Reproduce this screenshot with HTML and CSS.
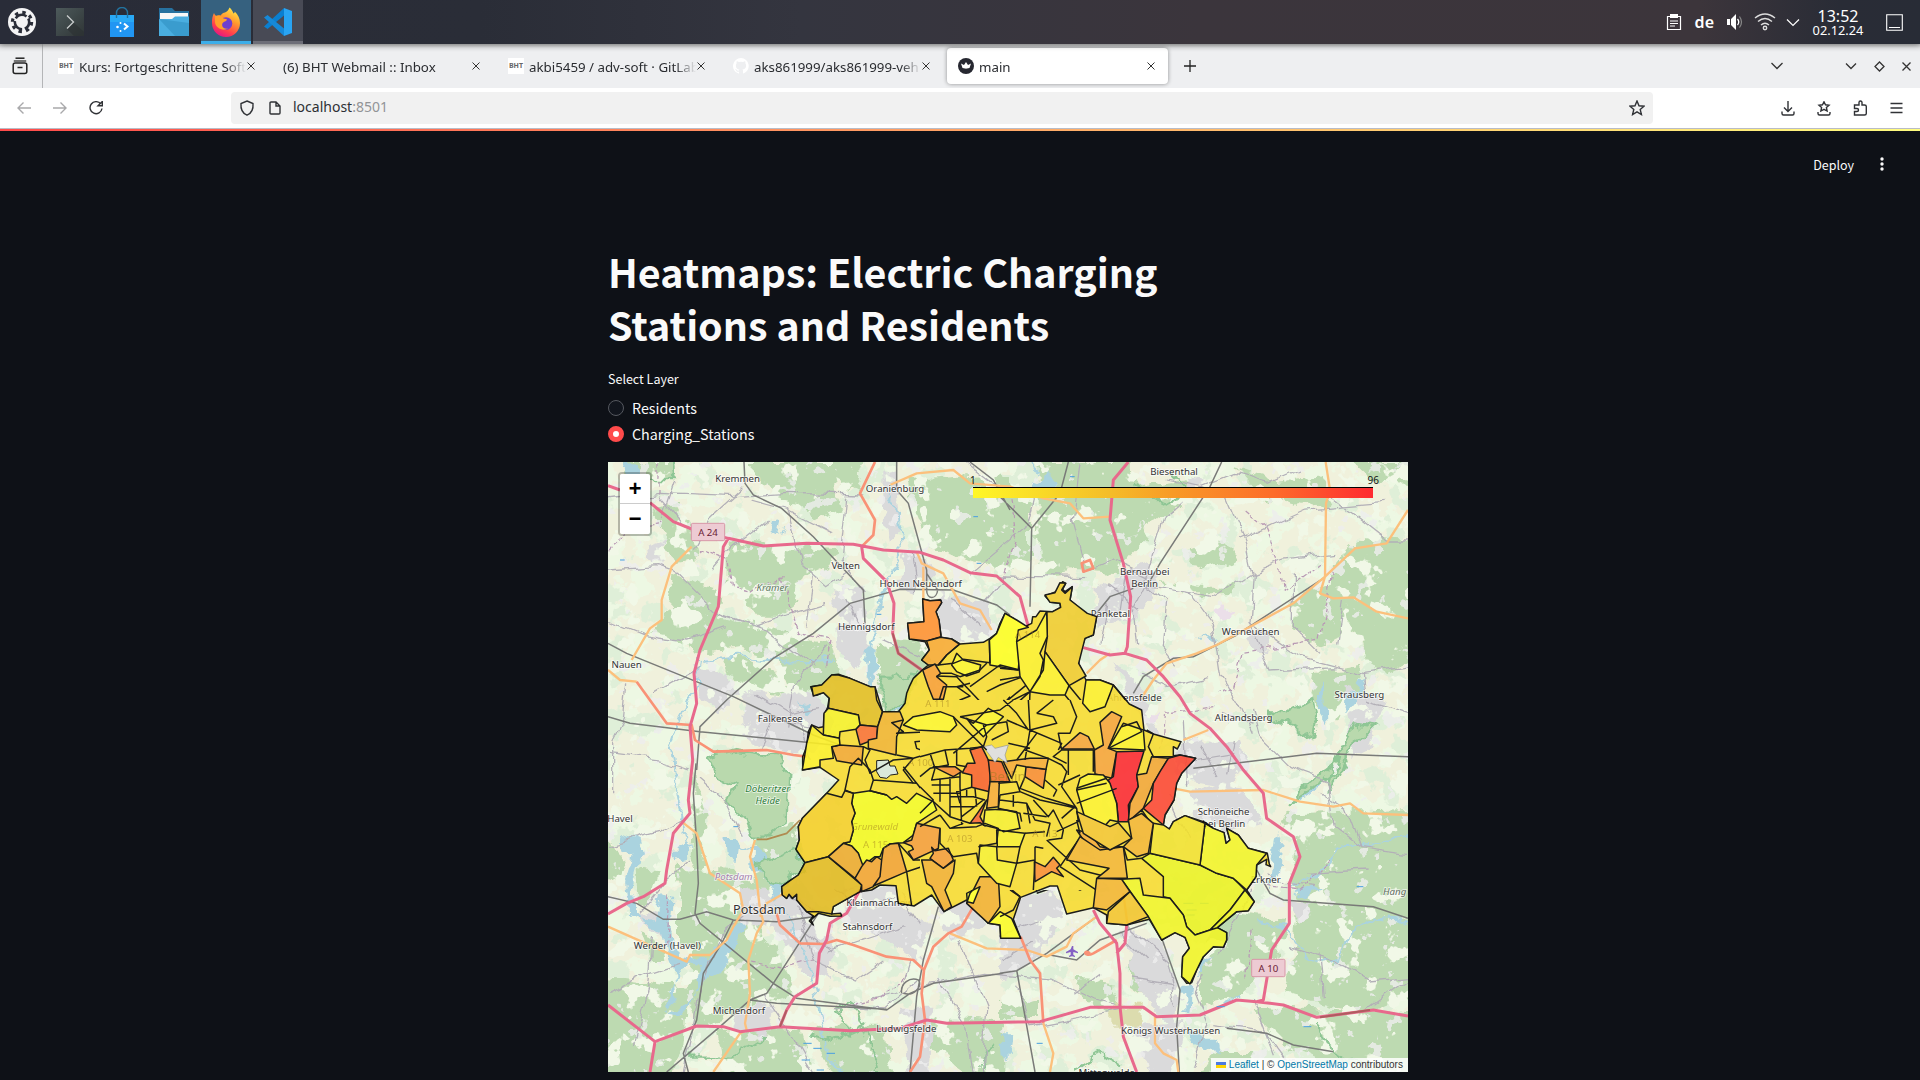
FILE: index.html
```html
<!DOCTYPE html>
<html lang="en">
<head>
<meta charset="utf-8">
<title>main</title>
<link rel="stylesheet" href="styles.css">
</head>
<body>
<div class="taskbar">
  <div class="launchers">
    <div class="launch kubuntu"><svg width="28" height="28" viewBox="0 0 28 28"><circle cx="14" cy="14" r="14" fill="#f4f4f5"/><circle cx="14" cy="14" r="7.2" fill="none" stroke="#2a2d38" stroke-width="2.6" stroke-dasharray="12.4 2.7" stroke-dashoffset="4"/><circle cx="14" cy="14" r="9.6" fill="none" stroke="#2a2d38" stroke-width="3.2" stroke-dasharray="3.4 4.14"/></svg></div>
    <div class="launch"><svg width="28" height="28" viewBox="0 0 28 28"><defs><linearGradient id="tg" x2="1" y2="1"><stop stop-color="#4d5a5b"/><stop offset="1" stop-color="#2f3536"/></linearGradient></defs><rect width="28" height="28" fill="url(#tg)"/><path d="M17 14l-6 7 7 7h10v-4z" fill="#2c3132" opacity=".6"/><path d="M11 7.500l6.500 6.500-6.500 6.500" fill="none" stroke="#c9cdcd" stroke-width="1.300"/></svg></div>
    <div class="launch"><svg width="26" height="30" viewBox="0 0 26 30"><path d="M1 8h24v22H1z" fill="#2196f3"/><path d="M1 8h24v7H1z" fill="#29a9f5"/><path d="M7.500 11V6a5.500 5.500 0 0 1 11 0v5" fill="none" stroke="#23739f" stroke-width="1.400"/><path d="M15 16.500l3.500 3-3.500 3" fill="none" stroke="#fff" stroke-width="2"/><circle cx="8.500" cy="20" r="1.300" fill="#fff"/><circle cx="11.500" cy="16" r="1" fill="#fff"/><circle cx="11.500" cy="24" r="1" fill="#fff"/></svg></div>
    <div class="launch"><svg width="30" height="28" viewBox="0 0 30 28"><path d="M0 0h13l3 3h14v16H0z" fill="#27719f"/><path d="M1 5h28v8H1z" fill="#f7f7f7"/><path d="M0 11h13l3-2.500h14V28H0z" fill="#4aaee0"/><path d="M0 11l16 17h14V15z" fill="#318fc2" opacity=".6"/></svg></div>
    <div class="launch active"><svg width="30" height="30" viewBox="0 0 30 30"><defs><linearGradient id="fx" x1=".8" y1="0" x2=".3" y2="1"><stop stop-color="#fff04a"/><stop offset=".4" stop-color="#ff9a2e"/><stop offset=".75" stop-color="#ff3f4d"/><stop offset="1" stop-color="#e31587"/></linearGradient></defs><path d="M3 6c.5 1.500 1.300 2.300 2.500 3 1-.6 2.500-.8 4-.5C11 6.500 12.500 5.800 14 5.500c2-.7 3.500-2.500 4.500-5 2 1.500 3 3.500 4 6 1-.5 1.200-1 1.200-2C27 7.500 29 11.500 29 16a14 14 0 0 1-28 0C.8 12 1.500 9 3 6z" fill="url(#fx)"/><circle cx="15" cy="16.500" r="6.300" fill="#6f3fd0"/><path d="M4 9c4-1.500 7 0 8.500 2.500 2 .2 3.200.5 3.500 1.300-1 2-3.500 1.700-4.500 3.500-1.500 3.500 2 6.500 6 5-5 3.500-13 0-13.500-6z" fill="#ffa02b"/></svg></div>
    <div class="launch open"><svg width="28" height="28" viewBox="0 0 28 28"><path d="M20 0L28 3v22l-8 3z" fill="#29a4f2"/><path d="M20 0v7.500L3.500 21 0 18.500z" fill="#0a7fd0"/><path d="M20 28v-7.500L3.500 7 0 9.500z" fill="#1689d8"/></svg></div>
  </div>
  <div class="tray">
    <svg width="16" height="18" viewBox="0 0 16 18"><path d="M1.500 3.500h13v13h-13z" fill="none" stroke="#fff" stroke-width="1.200"/><path d="M4 1h8v4H4z" fill="#fff"/><path d="M4 8h8M4 10.500h8M4 13h5" stroke="#fff"/></svg>
    <span class="lang">de</span>
    <svg width="18" height="18" viewBox="0 0 18 18"><path d="M1 6h3v6H1zM5 6l5-5v16l-5-5z" fill="#fff"/><path d="M11.500 6q2.500 3 0 6" fill="none" stroke="#fff" stroke-width="1.300"/><path d="M13.500 3.500q4 5.500 0 11" fill="none" stroke="#888" stroke-width="1.200"/></svg>
    <svg width="22" height="18" viewBox="0 0 22 18"><g fill="none" stroke="#ddd" stroke-width="1.400"><path d="M1 5q10-8 20 0M4 8.500q7-6 14 0M7 12q4-3.500 8 0"/><circle cx="11" cy="15" r="1.700"/></g></svg>
    <svg width="14" height="9" viewBox="0 0 14 9"><path d="M1 1.500l6 6 6-6" fill="none" stroke="#fff" stroke-width="1.200"/></svg>
    <div class="clock"><span class="time">13:52</span><span class="date">02.12.24</span></div>
    <svg width="17" height="17" viewBox="0 0 17 17"><path d="M.7.700h15.600v15.600H.7zM3 13.500h11" fill="none" stroke="#fff" stroke-width="1.100"/></svg>
  </div>
</div>

<div class="tabbar">
  <div class="firefox-view"><svg width="16" height="18" viewBox="0 0 16 18"><g fill="none" stroke="#222" stroke-width="1.500"><path d="M3.500 1.200h9" /><path d="M1.800 4h12.400" stroke-width="1.200"/><rect x="1.200" y="6" width="13.600" height="10.500" rx="2"/><path d="M5.500 10.500h5"/></g></svg></div>
  <div class="tabs">
    <div class="tab"><span class="bht">BHT</span><span class="label">Kurs: Fortgeschrittene Soft</span><svg class="x" viewBox="0 0 8 8"><path d="M.5.500l7 7m0-7l-7 7"/></svg></div>
    <div class="tab"><span class="label plain">(6) BHT Webmail :: Inbox</span><svg class="x" viewBox="0 0 8 8"><path d="M.5.500l7 7m0-7l-7 7"/></svg></div>
    <div class="tab"><span class="bht">BHT</span><span class="label">akbi5459 / adv-soft · GitLab</span><svg class="x" viewBox="0 0 8 8"><path d="M.5.500l7 7m0-7l-7 7"/></svg></div>
    <div class="tab"><svg class="fav" viewBox="0 0 16 16"><path fill="#fff" d="M8 0a8 8 0 0 0-2.500 15.600c.4 0 .5-.2.500-.4v-1.500c-2.200.5-2.700-1-2.700-1-.4-.9-.9-1.200-.9-1.200-.7-.5.100-.5.100-.5.8.1 1.200.8 1.200.8.7 1.200 1.900.9 2.300.7.100-.5.300-.9.500-1.100-1.800-.2-3.600-.9-3.600-4 0-.8.3-1.600.8-2.100-.1-.2-.4-1 .1-2.100 0 0 .7-.2 2.200.8a7.500 7.500 0 0 1 4 0c1.500-1 2.200-.8 2.200-.8.4 1.100.2 1.900.1 2.100.5.600.8 1.300.8 2.100 0 3.100-1.900 3.700-3.700 3.900.3.300.6.800.6 1.500v2.300c0 .2.100.5.500.4A8 8 0 0 0 8 0z"/></svg><span class="label">aks861999/aks861999-veh</span><svg class="x" viewBox="0 0 8 8"><path d="M.5.500l7 7m0-7l-7 7"/></svg></div>
    <div class="tab current"><svg class="fav" viewBox="0 0 16 16"><circle cx="8" cy="8" r="8" fill="#262730"/><path d="M3 5.500l3 1.500 2-3 2 3 3-1.500-1.500 4.500h-7z" fill="#fff"/><path d="M4.500 10h7l-3.500 1z" fill="#bbb"/></svg><span class="label">main</span><svg class="x" viewBox="0 0 8 8"><path d="M.5.500l7 7m0-7l-7 7"/></svg></div>
  </div>
  <svg class="newtab" width="12" height="12" viewBox="0 0 12 12"><path d="M6 0v12M0 6h12" stroke="#222" stroke-width="1.300"/></svg>
  <div class="winctl">
    <svg width="12" height="8" viewBox="0 0 12 8"><path d="M.5 1l5.500 5.500L11.500 1"/></svg>
    <svg class="min" width="12" height="8" viewBox="0 0 12 8"><path d="M1 1.500l5 5 5-5"/></svg>
    <svg width="11" height="11" viewBox="0 0 11 11"><path d="M5.500 1L10 5.500 5.500 10 1 5.500z"/></svg>
    <svg width="9" height="9" viewBox="0 0 9 9"><path d="M.5.500l8 8m0-8l-8 8"/></svg>
  </div>
</div>

<div class="toolbar">
  <div class="nav">
    <svg class="dim" width="14" height="14" viewBox="0 0 14 14"><path d="M14 7H1M6.500 1.500L1 7l5.500 5.500"/></svg>
    <svg class="dim" width="14" height="14" viewBox="0 0 14 14"><path d="M0 7h13M7.500 1.500L13 7l-5.500 5.500"/></svg>
    <svg width="14" height="14" viewBox="0 0 14 14"><path d="M11.800 3A6 6 0 1 0 13 7.500M13.300.500v4.300H9z"/></svg>
  </div>
  <div class="urlbar">
    <svg width="16" height="16" viewBox="0 0 16 16"><path d="M8 1L14 3.500C14.500 9 12 13.500 8 15.200 4 13.500 1.500 9 2 3.500z"/></svg>
    <svg width="12" height="14" viewBox="0 0 12 14"><path d="M2 1h5l4 4v7q0 1-1 1H2q-1 0-1-1V2q0-1 1-1zM7 1v4h4"/></svg>
    <span class="url">localhost<i>:8501</i></span>
    <svg width="16" height="16" viewBox="0 0 16 16"><path d="M8 1l2 4.800 5 .4-3.800 3.300 1.200 5L8 11.800l-4.400 2.700 1.200-5L1 6.200l5-.4z"/></svg>
  </div>
  <div class="actions">
    <svg width="14" height="15" viewBox="0 0 14 15"><path d="M7 0v10M3 6.500l4 4 4-4M1 10.500v2q0 1.500 1.500 1.500h9q1.500 0 1.500-1.500v-2"/></svg>
    <svg width="14" height="15" viewBox="0 0 14 15"><path d="M7 .800l1.500 3 3.500.4-2.600 2.300.7 3.500L7 8.300 3.900 10l.7-3.500L2 4.200l3.500-.4zM1 11v1.500Q1 14 2.500 14h9q1.500 0 1.500-1.500V11"/></svg>
    <svg width="15" height="16" viewBox="0 0 15 16"><path d="M1.500 15h10q1.800 0 1.800-1.500v-7q0-1.500-1.800-1.500H9V2.500q0-1.500-1.500-1.500T6 2.500V5H1.500v3.500H4q1.500 0 1.500 1.500T4 11.500H1.500z"/></svg>
    <svg width="13" height="12" viewBox="0 0 13 12"><path d="M.5 1.500h12M.5 6h12M.5 10.500h12"/></svg>
  </div>
</div>
<div class="decoration"></div>

<div class="app">
  <header><span>Deploy</span><svg width="4" height="14" viewBox="0 0 4 14" fill="#fafafa"><circle cx="2" cy="2" r="1.700"/><circle cx="2" cy="7" r="1.700"/><circle cx="2" cy="12" r="1.700"/></svg></header>
  <main>
    <h1>Heatmaps: Electric Charging<br>Stations and Residents</h1>
    <div class="radio-title">Select Layer</div>
    <div class="radio"><span class="dot"></span>Residents</div>
    <div class="radio"><span class="dot on"></span>Charging_Stations</div>
    <div class="map">
<svg class="tiles" width="800" height="610" viewBox="24 6 2400 1830">
<defs>
<filter id="rough" x="0" y="0" width="100%" height="100%"><feTurbulence type="fractalNoise" baseFrequency=".02" numOctaves="4" seed="4"/><feDisplacementMap in="SourceGraphic" scale="50" xChannelSelector="R" yChannelSelector="G"/></filter>
<filter id="bend" x="0" y="0" width="100%" height="100%"><feTurbulence type="fractalNoise" baseFrequency=".012" numOctaves="3" seed="6"/><feDisplacementMap in="SourceGraphic" scale="40" xChannelSelector="R" yChannelSelector="G"/></filter>
<filter id="meadow" x="0" y="0" width="100%" height="100%"><feTurbulence type="fractalNoise" baseFrequency=".014" numOctaves="5" seed="11"/><feColorMatrix values="0 0 0 0 .85  0 0 0 0 .94  0 0 0 0 .77  30 0 0 0 -16"/></filter>
<filter id="woods" x="0" y="0" width="100%" height="100%"><feTurbulence type="fractalNoise" baseFrequency=".012" numOctaves="5" seed="27"/><feColorMatrix values="0 0 0 0 .74  0 0 0 0 .86  0 0 0 0 .69  0 30 0 0 -17.800"/></filter>
<filter id="town" x="0" y="0" width="100%" height="100%"><feTurbulence type="fractalNoise" baseFrequency=".02" numOctaves="4" seed="8"/><feColorMatrix values="0 0 0 0 .855  0 0 0 0 .855  0 0 0 0 .855  0 0 30 0 -20"/></filter>
<filter id="fields" x="0" y="0" width="100%" height="100%"><feTurbulence type="fractalNoise" baseFrequency=".014" numOctaves="4" seed="18"/><feColorMatrix values="0 0 0 0 .88  0 0 0 0 .94  0 0 0 0 .8  0 0 30 0 -19"/></filter>
<clipPath id="clipNW"><path clip-rule="evenodd" d="M-600-400H2000V1600H-600ZM450 390H1110V960H450Z"/></clipPath>
<clipPath id="clipNE"><path clip-rule="evenodd" d="M-1300-400H1300V1600H-1300ZM-240 390H420V960H-240Z"/></clipPath>
<clipPath id="clipSW"><path clip-rule="evenodd" d="M-600-1000H2000V1600H-600ZM450-180H1110V390H450Z"/></clipPath>
<clipPath id="clipSE"><path clip-rule="evenodd" d="M-1300-1000H1300V1600H-1300ZM-240-180H420V390H-240Z"/></clipPath>
</defs>
<rect x="0" y="0" width="2450" height="1850" fill="#f0f1dc"/>
<rect x="0" y="0" width="2450" height="1850" filter="url(#meadow)"/>
<rect x="0" y="0" width="2450" height="1850" filter="url(#woods)"/>
<g filter="url(#rough)"><rect width="2450" height="1850" fill="none"/>
<g fill="#bddab1">
<path d="M435 6H800L770 100 700 60 720 150 640 190 600 130 540 120 500 70ZM930 60L1230 40V330L1100 300 1000 270 940 120ZM380 240L560 262 700 270 690 320 600 360 590 430 540 470 460 470 450 420 380 380ZM220 350L360 390 350 470 560 520 560 600 420 560 300 580 230 540 150 520 200 480ZM150 150L230 130 270 200 290 300 230 310 200 250ZM560 520L700 560 720 640 620 700 560 680 540 600ZM830 535L965 545 990 600 960 640 900 760 840 740ZM60 6H220V60H80ZM360 590L450 600 540 660 560 700 480 690 380 640Z"/>
<g transform="translate(1200 0)"><path d="M110 6H390L420 80 560 60 540 150 420 200 440 240 400 280 350 340 230 330 120 340 110 200ZM-10 20L90 150 90 320 -10 300ZM1080 230L1240 240V600L1160 640 1100 600 1080 520 1010 540 960 560 880 500 870 420 980 370 1010 300ZM940 640L1080 620 1090 660 1000 780 930 700ZM560 280L660 240 720 300 600 330ZM700 20L820 60 960 50 1000 130 900 140 780 110ZM490 360L600 380 700 380 690 400 540 400ZM1060 6H1240V70L1120 60Z"/></g>
<g transform="translate(0 900)"><path d="M230 320L400 330 520 400 480 500 440 750 300 800 250 720 290 600ZM10 650L260 680 250 860 200 950H10ZM450 520L520 560 600 700 450 740ZM350 810L600 800 640 950H380ZM470 240L590 180 610 300 540 400 470 380ZM640 800L850 800 880 950H700ZM290 40L320 180 300 330 270 330ZM10 240L80 300 60 360 10 340ZM950 760L1210 790 1210 950 1120 950 980 850Z"/></g>
<g transform="translate(1200 900)"><path d="M660 460L860 480 830 600 700 720 600 740 600 600ZM870 160L1240 150V700L1100 760 1000 740 860 700 880 560 900 420 870 350 890 240 850 200ZM760 740L1240 760V950H1060L860 860 800 800ZM0 720L120 710V780H0ZM230 650L350 660 340 760 240 720ZM650 870L760 870 740 950H600ZM390 560L520 700 520 770 390 680Z"/></g>
</g>
<g fill="#dadadb">
<path d="M850 30L890 20 900 200 860 240 850 120ZM910 270L990 290 1000 350 960 420 900 380ZM1000 400L1170 430 1170 530 1080 550 1020 520ZM700 390L790 380 810 560 760 640 720 560ZM280 620L380 640 420 700 360 760 300 720ZM430 700L640 700 700 790 640 880 560 880 440 840ZM140 260L200 240 190 300 150 310Z"/>
<path d="M1480 390L1640 310 1690 370 1600 480 1490 500ZM1540 600L1640 700 1690 850 1640 800 1590 720ZM1740 850L1920 830 1950 930 1860 980 1730 960ZM2230 680L2360 720 2300 880 2260 900ZM1930 500L2010 520 2000 580 1950 560ZM1770 50L1810 60 1780 100 1750 90Z"/>
<path d="M410 1280L580 1300 700 1390 690 1560 600 1530 530 1400 420 1390ZM720 1280L890 1280 940 1370 1000 1400 960 1520 860 1440 760 1400ZM900 1640L1000 1640 980 1850 930 1850ZM110 1350L210 1380 200 1430 130 1400ZM1000 1330L1110 1330 1160 1400 1050 1440ZM1200 1350L1360 1280 1400 1370 1300 1500 1200 1560ZM1560 1400L1690 1440 1740 1600 1720 1700 1620 1600ZM1600 1690L1760 1680 1720 1850 1650 1850ZM1750 1000L1900 960 1990 1080 1900 1110 1770 1060ZM2060 1320L2130 1330 2100 1380ZM420 1640L520 1640 500 1740 400 1700Z"/>
</g>
</g>
<rect x="0" y="0" width="2450" height="1850" filter="url(#town)" opacity=".8"/>
<rect x="0" y="0" width="2450" height="1850" filter="url(#fields)"/>
<g filter="url(#rough)"><rect width="2450" height="1850" fill="none"/>
<path fill="#dcdcae" d="M1540 1640h85v60h-85z"/><path fill="#ebdfe9" d="M1840 450l30-20 30 35-40 20zM1650 760h30v25h-30z"/>
<g fill="#aad3df"><path d="M100 15L120 70 90 60 60 20ZM525 180L550 190 540 230 520 220ZM800 560L830 570 825 690 800 650ZM925 690L895 755 870 750 900 710ZM590 730L640 745 625 755ZM1300 70L1340 45 1380 60 1350 85ZM1800 540L1850 535 1835 555ZM2160 660L2175 700 2180 790 2160 760ZM2240 700L2300 660 2270 720 2235 760ZM2120 1320L2160 1280 2080 1290Z"/><path d="M60 1120L110 1140 120 1180 80 1180ZM100 1180L120 1180 90 1290 140 1400 190 1420 200 1480 220 1530 230 1620 190 1660 240 1670 310 1560 370 1530 440 1400 420 1380 380 1450 320 1490 280 1500 225 1490 220 1440 215 1400 220 1320 180 1300 165 1390 90 1360 75 1260ZM370 1140L415 1140 410 1200 375 1190ZM230 1160L270 1150 260 1200 230 1210ZM200 1640L240 1530 300 1520 280 1620 200 1660ZM455 1160L500 1200 545 1280 530 1320 490 1250 450 1220ZM560 1200L600 1160 610 1210 590 1250ZM1840 1480L1810 1520 1790 1560 1800 1500ZM1750 1580L1770 1580 1765 1660 1750 1660ZM1200 1720L1240 1720 1230 1790 1205 1790ZM1770 1730L1850 1730 1860 1780 1780 1750ZM2090 1010L2180 940 2140 1000 2100 1020ZM2020 1180L2030 1120 2050 1130 2040 1240 2010 1280Z"/></g>
<path fill="#bddab1" d="M110 1230L170 1240 150 1330 120 1330ZM240 1250L280 1280 280 1450 240 1460ZM120 1420L180 1440 190 1500 150 1500Z"/>
<g fill="none" stroke="#aad3df" stroke-width="6"><path d="M865 100L895 160 905 260 880 330 850 400 830 500 800 600 820 680M310 600L400 590 560 605 700 600M300 600L280 700 240 780 210 870 230 1020 270 1170M540 1330L620 1500 660 1650 690 1800 720 1836M1290 0L1310 40M1980 1390L2060 1400 2090 1470 2160 1510 2220 1500 2240 1420 2300 1380 2424 1390M2060 1280L2150 1250 2220 1160 2330 1150 2424 1110M1880 1640L1920 1600M400 1150L450 1180"/></g>
<g fill="#b9d9ad" stroke="#8fc695" stroke-width="7"><path d="M320 890L400 870 540 890 565 930 560 1080 500 1130 460 1130 440 1080 380 1020 400 980 340 950Z"/><path d="M470 1210L590 1160 610 1230 540 1270 500 1260Z"/><path d="M840 650L900 650 950 640 920 700 870 750 840 720 860 690Z"/><path d="M2010 750L2060 760 2140 710 2150 760 2140 840 2080 800 2020 780ZM2330 800L2260 790 2230 850 2200 900 2180 1000 2220 940 2250 860ZM2070 1040L2100 990 2200 910 2220 880 2210 940 2100 1010Z"/><path fill="none" d="M1600 80L1700 130 1750 100 1720 40M260 1790L400 1790 500 1730M640 1720L700 1740 790 1700 840 1836M2150 1680L2180 1750 2300 1836M1140 1836L1180 1740M710 1650L760 1620 790 1690 740 1710ZM1420 1836L1500 1780 1560 1820M120 60L220 60 215 6"/></g>
</g>
<g filter="url(#bend)"><rect width="2450" height="1850" fill="none"/>
<g fill="none" stroke="#b3b0b8" stroke-width="3.800">
<path d="M24 120L180 100 400 110 560 100 790 105M180 110L260 200 360 240M430 80L330 170 280 260M190 180L230 60M560 150L600 310 680 380 750 330M24 330L170 320 230 340 350 460 500 510 640 620M24 480L120 520 260 540 380 500M360 460L470 500 580 460 680 430M160 700L300 620M80 670L70 780 35 850 35 1000M640 350L620 500M560 800L580 680 680 560M600 780L640 900M740 110L720 300 790 390M24 880L180 900 270 930M450 120L560 150 700 220M500 180L400 260 340 330M1100 6L1210 90M1150 430L1210 360M840 535L960 590"/>
<path d="M1440 6L1420 180 1460 330 1530 300 1640 350M1310 80L1280 200 1110 340M1750 120L1690 170 1630 360M1640 370L1760 390 1840 500 1860 640 1910 720 1960 830M1640 370L1600 450 1610 560M1640 370L1700 420 1690 560 1730 610M1760 390L1850 410 1960 340 2060 300 2200 280M1880 110L1940 250 1960 340 1950 490 2100 590 2290 640M1920 240L2120 150 2360 130M1950 490L2010 630 2200 620M2180 100L2360 240 2424 240M2080 340V500L2160 580M2230 420L2210 560M1620 640L1700 680 1830 650M2290 640L2424 620M2290 640L2300 720 2424 760M1960 750L1980 830 2070 920M1860 760L1960 800M1750 790L1760 980M2070 920L2180 960 2200 1100 2280 1160M1200 345L1470 350M1520 430L1500 560M1700 60L1800 80 1900 40 2010 70 2100 30"/>
<path d="M24 1160L180 1120 250 1080M120 1360L200 1260 270 1200M160 1430L150 1570 100 1760M24 1600L150 1540 240 1510M430 1130L380 1030 300 960M430 1370L360 1430 310 1550 280 1700 250 1836M590 1340L640 1500 760 1560 850 1500M650 1360L560 1300M680 1480L800 1440 920 1400M930 1500L900 1600 820 1620M700 1640L860 1650 960 1560M500 1610L560 1700 640 1836M1010 1560L1100 1700 1120 1836M960 1580L1150 1540 1360 1560 1480 1620 1560 1640M1080 1440L1160 1640 1150 1836M1580 1400L1700 1500 1730 1640M1250 1580L1290 1700 1560 1650M1420 1600L1500 1540M1590 1560L1720 1580M1780 1820L1820 1700 1780 1600 1810 1540M1840 1700L2000 1720 2060 1800 2200 1820M1950 1300L1860 1480M2000 1240L2060 1270 2150 1280M2160 1000L2240 1050 2280 1160 2424 1180M2120 1240L2300 1230M2070 1460L2200 1500 2300 1560 2424 1550M2170 1610L2160 1480M1960 1620L2020 1780M2300 1650L2424 1560M1760 1130L1700 1000"/>
<path d="M460 700L560 760 660 740M480 860L520 780 640 800M700 1290L760 1330 880 1320M900 1300L960 1400M600 1400L700 1480M740 420L780 500M1530 380L1620 450M1580 340L1560 480M1200 1420L1320 1380M1210 1500L1300 1450M1560 1420L1640 1500M1780 900L1900 880M1800 860L1860 960M1900 840L1880 940M930 280L950 400M1050 420L1140 500"/>
<path stroke="#b99bb5" stroke-dasharray="14 7" d="M180 6V110M24 270L100 200 190 190M560 350L480 370 450 390 400 380 390 300 290 270M550 350L570 450 600 520 690 540 680 620M1230 100L1250 240 1210 350M1940 150L2000 200 2040 300 2050 390 2160 310M2200 340L2160 540 1930 580 1900 680 1840 700M1840 740L1700 760 1690 860M450 1500L560 1520 640 1500M210 1300L200 1460M1950 1400L1940 1560M740 1640L840 1620 920 1540M2010 1280L2100 1290 2190 1200"/>
</g>
</g>
<g fill="none" stroke="#797a78" stroke-width="4.500">
<path d="M432 6L435 70 460 105 545 145 640 230 790 390 795 490M890 6V90L925 130 980 330V390C980 420 1010 420 1013 390L980 340M24 550L80 580 400 710 640 825 720 855M24 770L90 790 300 815 700 855M290 930L300 800 380 720 520 595 640 520 750 430 900 388 1060 390 1190 435 1230 465M1110 6L1180 60 1230 150M1405 6L1380 100 1295 205 1290 440M1200 110L1295 205M1865 6L1830 80 1680 310 1640 380M1490 460L1530 410 1600 385M1600 700L1630 650 1720 595 1780 590 1910 525 2170 355M1780 925L2150 880 2424 890"/>
<path d="M288 910L280 1000 290 1150 295 1270 285 1360 300 1390 520 1570 590 1615 860 1650 930 1600 1000 1570 1210 1540M24 1310L110 1330 190 1378 240 1378 320 1355 400 1380 530 1385 640 1370 655 1360 520 1570 500 1600 450 1620 360 1700 200 1836M450 1620L530 1630 860 1648M1015 1340L970 1500 950 1610 930 1836M400 1380L365 1450 310 1540 290 1680 250 1780 265 1836M905 1600C900 1570 930 1550 955 1560C970 1580 940 1610 910 1600M1200 1540L1250 1532 1340 1480 1490 1370M1250 1530L1305 1836M1350 1485L1430 1500 1500 1440 1640 1390M1680 1420L1740 1590 1730 1700 1738 1836M1970 1230L2010 1300 2050 1320 2320 1340 2424 1375M1880 1705L2000 1720 2080 1755 2200 1775"/>
</g>
<g fill="none" stroke-linejoin="round">
<g stroke="#fcc07c" stroke-width="7">
<path d="M24 630L60 660 110 665M95 600L150 505 185 480 185 420 215 320 275 260M870 75L950 40 1060 30 1110 70 1230 80 1330 115 1410 130 1450 175 1530 170M950 275L965 310 1030 340 1080 430 1140 450 1175 510M970 320V430M2177 6L2190 90 2178 130 2175 350M2424 150L2360 250 2265 265 2175 350 2160 400 2200 415 2260 412 2330 455 2424 475M2175 350L2080 430 1950 500 1850 555 1790 580 1700 610 1660 660 1620 720M1750 840L1825 810M1460 640L1500 600 1530 580M1720 985L1770 995 1990 990 2100 1025 2200 1040 2250 1030 2290 1060 2424 1065"/>
<path d="M245 1085L290 1120 330 1240 420 1300 430 1350 400 1400 380 1440 330 1485 270 1485 260 1505 24 1400M465 1140L450 1190 470 1260 480 1350 490 1385 470 1420 445 1500 450 1600 435 1690 440 1710 420 1720 340 1836M480 1370L500 1330 570 1290M1050 1420L1160 1465 1280 1470 1340 1490 1400 1460 1420 1420 1490 1370M1570 1300L1582 1390M1330 1690L1360 1780 1350 1836M1665 1670V1750L1690 1780 1730 1800 1735 1836"/></g>
<g stroke="#f99276" stroke-width="8"><path d="M825 6L780 100 825 180 820 225 785 260M110 665L200 790 275 795 285 840 340 875 500 870 580 885 620 890M1445 310L1450 335 1480 325 1470 300ZM530 1360L540 1395 600 1450 670 1452 710 1440 760 1455 860 1490 940 1500 972 1530 965 1600 975 1680 960 1790 930 1836M972 1530L1000 1460 1045 1420 1085 1400 1120 1340M1262 1430L1290 1500 1320 1540 1330 1690M1470 1480C1450 1465 1450 1495 1480 1480L1550 1440"/><path stroke="#b08a50" stroke-width="5" d="M470 1138H500L560 1120 600 1080"/></g>
<g stroke="#e8698c" stroke-width="9"><path d="M24 77L60 90M150 128L220 185 275 207 385 235 490 258 620 250 760 253 850 270 960 277 1030 300 1110 338 1190 348 1260 410 1285 500M385 235L370 260 355 440 300 570 282 640 290 730 270 800 278 900 265 1020 270 1060 220 1120 200 1230 195 1270 130 1310 80 1330 24 1362M785 260L790 295 860 365 882 430 878 520 895 580 965 630M1585 6L1540 60 1530 180 1570 310 1592 410 1582 560 1575 580 1530 585 1450 563M1575 580L1640 600 1690 650 1740 710 1770 760 1830 805 1880 860 1930 930 1990 1000 2000 1075 2080 1130 2100 1190 2068 1270V1390L2015 1470 1990 1620 1970 1625 1910 1620 1800 1665 1670 1670 1630 1642H1470L1320 1685 1040 1690 980 1680 900 1705 750 1712 540 1700 420 1715 370 1700 290 1698 165 1745 24 1635M165 1745L150 1836M540 1700L560 1650 585 1610 650 1570 658 1480 680 1440 690 1390 740 1360 780 1290M1480 1350L1500 1390 1550 1450 1560 1540V1640L1570 1730 1610 1836M1580 1395L1575 1450 1550 1480M1970 1625L2050 1635 2150 1672 2320 1650 2424 1668"/><path stroke="#b05c60" stroke-width="6" d="M878 520L895 580 965 630M540 1700L560 1650M2160 1672L2310 1650"/></g></g>
<g class="shield"><rect x="274" y="190" width="100" height="52" rx="4"/><rect x="1955" y="1498" width="100" height="52" rx="4"/></g>
<g class="place">
<text x="413" y="67">Kremmen</text><text x="885" y="95">Oranienburg</text><text x="737" y="327">Velten</text><text x="962" y="382">Hohen Neuendorf</text><text x="799" y="510">Hennigsdorf</text><text x="80" y="623">Nauen</text><text x="541" y="786">Falkensee</text><text x="1722" y="45">Biesenthal</text><text x="1634" y="344">Bernau bei</text><text x="1634" y="381">Berlin</text><text x="1531" y="472">Panketal</text><text x="1952" y="525">Werneuchen</text><text x="1603" y="724">Ahrensfelde</text><text x="1931" y="784">Altlandsberg</text><text x="2278" y="713">Strausberg</text><text x="60" y="1087">Havel</text><text x="478" y="1362" class="city">Potsdam</text><text x="839" y="1339">Kleinmachnow</text><text x="802" y="1410">Stahnsdorf</text><text x="202" y="1467">Werder (Havel)</text><text x="417" y="1662">Michendorf</text><text x="919" y="1715">Ludwigsfelde</text><text x="1871" y="1064">Schöneiche</text><text x="1871" y="1102">bei Berlin</text><text x="1997" y="1270">Erkner</text><text x="1712" y="1723">Königs Wusterhausen</text><text x="1520" y="1848">Mittenwalde</text>
<g class="it"><text x="517" y="394" fill="#5e7a5e">Krämer</text><text x="503" y="995" fill="#2f7d3a">Döberitzer</text><text x="503" y="1031" fill="#2f7d3a">Heide</text><text x="401" y="1261" fill="#a581ad">Potsdam</text><text x="2384" y="1304" fill="#5e6e5e">Hang</text></g>
<text x="324" y="227" fill="#6a1b36" stroke="none">A 24</text><text x="2005" y="1535" fill="#6a1b36" stroke="none">A 10</text>
</g>
<path d="M1416 1458l4 0 0 10 14 8v4l-14-4v8l5 4v3l-9-2-9 2v-3l5-4v-8l-14 4v-4l14-8z" fill="#8461c4"/>
<path d="M400 1100h14M60 300h14M1120 170h14M1130 310h14M830 463h14M1410 50h14M1750 1330h30M1760 1350h30M610 1750h25M640 1765h25M680 1780h25M605 1800h25M650 1830h22M1800 1330h26M1760 1365h24M2270 1280h20M1850 1640h24M2110 1700h24M1310 1750h18" stroke="#4a9fe0" stroke-width="3"/>

<g opacity=".88" stroke="#000" stroke-width="4.500" stroke-linejoin="round">
<path class="berlin" fill="#f8dc30" d="M632 680L640 703 650 706 675 695 688 712 683 742 672 765 670 800 655 803 635 795 625 815 620 860 608 890V930L660 922 716 960 680 1000 607 1075 595 1100 598 1140 588 1168 615 1208 595 1245 570 1262 545 1280 547 1305 560 1315 567 1303 577 1315 590 1303 590 1320 620 1355 640 1368 628 1383 640 1395 633 1380 655 1360 690 1369 725 1368 722 1360 695 1362 700 1340 780 1295 815 1290 840 1275 888 1277 895 1330 942 1338 995 1305 1032 1355 1100 1320 1165 1390 1200 1395 1202 1432 1262 1435 1240 1378 1262 1312 1350 1278H1372L1400 1362 1480 1343 1520 1365V1390L1580 1395 1648 1378 1685 1440 1725 1418 1755 1432 1768 1465 1748 1490 1745 1550 1760 1570 1775 1568 1790 1530 1810 1490 1840 1460 1870 1462 1880 1440V1418L1852 1403 1910 1355 1945 1352 1963 1325 1940 1290 1968 1250 1970 1215 2000 1198 1998 1214 2012 1220 2008 1212 2002 1180 1945 1165 1915 1125 1880 1105 1890 1140 1878 1150 1872 1118 1840 1105 1815 1087 1755 1067 1720 1085 1708 1107 1690 1095 1695 1065 1722 1020 1730 970 1745 940 1787 895 1740 885 1720 887V860L1732 867 1743 845 1660 822 1632 810 1625 750 1588 732 1540 675 1500 660H1458L1450 645 1436 610 1440 580 1455 535 1480 525 1490 470 1462 465 1410 420 1417 380 1395 395 1388 388 1397 370 1388 365 1368 395 1335 408 1352 427 1380 430 1382 442 1358 455 1320 453 1308 470H1298L1295 490 1275 500 1255 488 1240 475 1215 460 1200 490 1190 520 1170 535 1150 547 1080 552 1055 537 1022 532 1023 525 1017 480 1008 455 1025 428 1022 420 990 422 968 417 972 485 923 490 928 537 975 545 988 570 965 600 985 615 965 632 940 655 928 680 920 700 915 730 895 755H848L825 680H810L750 655 715 643 695 645 665 675Z"/>
<g transform="translate(510 330)">
<path fill="#ff9130" d="M458 87L480 92 512 90 515 98 498 125 507 150 513 200 470 213 418 207 413 160 462 155Z"/>
<path fill="#f9aa30" d="M470 213L512 202 545 207 568 222 530 255 505 285 475 285 455 270 478 240Z"/>
<path fill="#f9a030" d="M458 300L495 282 512 310 500 320 530 345 520 388 490 388 475 350Z"/>
<path fill="#e3be20" d="M125 350L155 345 185 315 205 315 240 325 300 350 315 350 320 390 337 425 323 470 270 465 265 435 175 415 178 385 160 368 130 378Z"/>
<path fill="#f7f125" d="M175 415L265 435 270 465 258 478 210 485 208 505 160 495 162 430Z"/>
<path fill="#fa7130" d="M258 478L270 465 323 470 320 505 270 525Z"/>
<path fill="#f2b42c" d="M338 425H390L400 450 380 500 378 555 295 535 295 510 320 505 323 470Z"/>
<path fill="#f3a92e" d="M185 530L210 525 280 530 275 585 200 572Z"/>
<path fill="#fdf025" d="M97 600L110 520 125 465 160 495 208 505 210 525 185 530 190 565 150 570V590Z"/>
<path fill="#d8e8dc" stroke-width="3" d="M320 572L355 570 360 588 375 588 384 612 362 615 350 625 330 622 320 605Z"/>
<path fill="#ffff20" d="M705 130L740 150 775 172 745 180 740 215 750 230 745 300 660 285 658 210 680 190Z"/>
<path fill="#fdf528" d="M560 250L580 270 632 285 628 305 590 318 560 305 545 285ZM400 465L430 440 510 425 550 440 560 465 540 485 440 480ZM590 445L610 460 655 415 700 440 640 500 605 465Z"/>
<path clip-path="url(#clipNW)" fill="none" d="M570 222L530 255 505 285 550 280 580 268 660 278 658 210M500 318L560 320 640 405 690 410 775 340M512 310L545 310 570 320 630 300 650 280M600 350L690 285 750 300M600 340L560 350 600 378 570 390 590 410 565 440 510 415M520 388L500 415 520 350 580 350M650 365L690 345 760 320M560 440L600 480 640 520M540 500L690 415 720 380M400 450L365 458 400 485 380 490 480 485 490 510 435 515 440 535 480 550 430 565M380 555L430 565 480 550 540 535 560 500 540 485M280 530L300 540 285 570 300 610 370 570 430 565 400 600 430 640M628 390L630 450 700 455M690 410L700 450 760 470 775 450"/></g>
<g transform="translate(1200 330)">
<path fill="#f1cc2c" d="M140 125L158 125 182 112 180 100 150 97 135 75 165 68 180 38 197 40 185 60 195 70 217 50 210 90 262 130 290 140 280 195 255 205 236 280 258 318 207 347 135 245 142 200Z"/>
<path fill="#fdf028" d="M140 125L142 200 120 250 130 270 120 320 90 365 60 320 50 215 110 180ZM135 245L207 347 195 375 150 375 90 365 130 300ZM258 330H300L340 345 315 410 270 425 248 400Z"/>
<path fill="#f7a436" d="M300 457L335 425 365 440 325 535 350 545 335 625 285 612 283 540 310 525ZM185 537L240 488 265 500 283 537Z"/>
<path fill="#fc282e" d="M350 545L432 543 410 615 415 650 385 705 388 755H355L350 700 325 630 340 620Z"/>
<path fill="#f3a632" d="M455 560L505 565 460 640 430 715 385 755 390 700 415 650 410 615 440 610Z"/>
<path fill="#fd4731" d="M505 565L540 555 587 565 545 610 530 640 522 690 495 735 490 765 430 715 455 690 460 640 480 605Z"/>
<path fill="#fdf228" d="M240 625L265 612 310 615 330 640 350 700 355 755 330 750 308 775 285 750 255 745 230 660ZM325 535L370 460 430 480 435 540Z"/>
<path clip-path="url(#clipNE)" fill="none" d="M90 365L85 490M90 365L0 410M0 330L62 320M0 295L55 300M90 365L50 400 40 430 60 480M195 375L215 400 210 430 230 450 225 475M207 347L250 400 270 425 300 457 310 525M270 425L230 450M340 345L385 400 270 425M440 480L460 492 445 530 460 560 520 560M385 755L425 720 460 770"/><path fill="none" d="M365 470L410 455 425 485 325 535M230 660L320 640"/></g>
<g transform="translate(510 900)">
<path fill="#f5fa20" d="M250 100L300 92 350 105 365 118 380 110 410 130 440 100 490 125 500 150 440 190 430 225 400 248 380 250 360 252 340 265 330 290 315 290 275 320 265 280 245 258 220 250 240 245 250 210 245 185 255 160 245 130Z"/>
<path fill="#f5cf25" d="M170 100L215 112 225 92 250 100 245 130 255 160 245 185 250 210 240 245 220 250 175 290 105 308 78 268 88 240 85 200 97 175Z"/>
<path fill="#e3ba1f" d="M105 308L175 290 275 375 270 395 190 440 185 462 145 455 110 455 80 420 80 403 67 415 57 403 50 415 37 405 35 380 60 362 85 345Z"/>
<path fill="#edaa2c" d="M175 290L220 250 245 258 265 280 280 320 255 355Z"/>
<path fill="#f3a32f" d="M275 320L290 300 305 305 320 290 335 300 330 350 310 380 275 395V375L255 355ZM340 265L360 252 385 250 410 335 310 378 330 350 335 300Z"/>
<path fill="#f59e35" d="M440 190L510 205 505 265 430 300 415 275 430 268 425 258 400 248 425 240ZM480 295L490 280 485 262 495 272 535 265 550 300 520 325Z"/>
<path fill="#f3b12e" d="M455 300L485 300 520 325 555 300 550 340 525 390 545 440 522 455 485 380 470 370ZM630 350L685 350 690 440 655 490 590 430Z"/>
<path fill="#ffff25" d="M655 490L690 455 725 475 752 535H692L690 495ZM590 400L630 380 610 430 592 425Z"/>
<path clip-path="url(#clipSW)" fill="none" d="M250 100L225 90 240 20 265 -5 300 30 310 60 300 92 350 105M310 60L440 70 460 95M440 70L400 20M385 250L430 300M410 335L425 438M430 300L470 300M410 335L455 320 485 380M590 430L600 400 640 350M525 390L570 330M720 390L750 410"/></g>
<g transform="translate(960 720)">
<path fill="#fa6327" d="M150 150L185 140 205 180 212 210 208 275 155 262 155 225 127 218 142 190 165 190Z"/>
<path fill="#f46d27" d="M205 180L245 185 270 245 212 245Z"/>
<path fill="#f9652f" d="M200 300L180 350 195 378 180 368 150 370 172 340Z"/>
<path fill="#fa8e2f" d="M318 200L378 208 370 265 315 230ZM40 200L105 200 125 215 100 230ZM343 485L375 500 400 472 420 495 410 505 430 530 395 515 345 545Z"/>
<path fill="#f7ab30" d="M250 185L330 175 385 175 378 208 318 200 290 195 275 235ZM210 245L238 245 235 320 200 325ZM470 390L510 400 540 440 600 450 560 475 510 450Z"/>
<path fill="#dedede" stroke="#888" stroke-width="2" d="M190 140L215 135 225 145 265 135 255 165 262 190 235 172 225 187Z"/>
<path fill="#f8ee2a" d="M195 330Q240 325 290 335L300 385 250 395 230 385 190 375ZM230 390L315 400 300 440 232 440ZM180 435L230 440 232 480 290 490 270 560 230 550 175 490Z"/>
<path fill="none" d="M0 170L75 150 150 145 190 140M75 150L85 195 30 205 0 230M110 150V195L140 200M30 160L45 205 35 240 120 230M90 230V350M120 215V260L125 375M60 235V305M35 255H90M40 280H120M90 290L160 290 195 300M90 320H165M35 300L90 350 150 370M0 260L40 300 0 340M155 262L110 275 120 310M140 270V290M165 265L170 320M125 350L190 300M130 370L90 385 60 345M0 380L60 345M60 385L60 430 100 470 170 460 175 490M90 385L170 380 195 370 235 385 230 430 175 440M235 250L290 245 300 275 240 285M240 285L235 325 300 340 305 365M240 300L320 310 330 370M280 285V320M300 275L360 300 470 325M320 310L345 360 390 370 380 410M340 300L385 350 400 330 430 390 425 415 385 420M310 340L380 350M300 440L290 490M345 440V480L290 490M315 400L375 395M345 440L370 445M345 480L340 570M315 230L300 265 380 295 465 320 425 355M375 240L410 270 400 290M385 175L425 195 440 215 425 260 470 325 475 365 410 395M425 150L400 170 440 190M445 150V225M315 150L385 175M260 60L330 90 315 180M330 90L410 70 400 50 350 40M330 90L425 130 415 150M350 100L290 180M265 130L330 145M260 65L265 95 215 120M190 75L200 110 190 140M100 50L200 150M260 65L200 75 100 160M380 420L480 510 560 530M420 500L475 420M420 500L560 590M475 360L540 395 610 395 635 420 620 440 550 440M470 360L480 400M470 265L560 235M470 310L590 265M520 150V215M425 150L520 150M480 225L415 255M325 0L330 90M120 50L200 75M250 0L290 40 325 90M450 0L470 50 450 100 415 100 425 150M350 40L400 0M280 0L240 30 120 50"/></g>
<g transform="translate(1200 900)">
<path fill="#ecf321" d="M425 295L450 280 600 315 650 340 700 355 735 390 690 450 630 510 585 525 560 500 550 465 510 415 490 410 490 350Z"/>
<path fill="#f4f528" d="M615 190L640 205 672 218 678 250 690 240 680 205 715 225 745 265 800 280 770 315 768 350 740 390 700 355 650 340 600 315Z"/>
<path fill="#f2f525" d="M365 358L420 355 430 405 510 415 550 465 560 500 585 525 630 510 652 503 680 518V540L670 562 640 560 610 590 590 630 570 672 545 650 548 590 568 565 555 532 525 518 485 540 445 470ZM652 503L630 510 690 450 735 390 763 425 745 452 710 455Z"/>
<path fill="#f3e22c" d="M460 190L490 195 508 207 520 185 555 167 615 190 600 315 450 280Z"/>
<path fill="#f4b62e" d="M290 355L365 358 390 395 320 450 280 443ZM385 180L425 160 460 190 445 280 410 290 370 260 395 235ZM240 230L300 270 370 260 382 355 290 355 327 325 200 300Z"/>
<path fill="#f4c52c" d="M325 455L390 395 445 470 380 495 320 490ZM230 155L330 200 355 188 395 235 330 270 250 220Z"/>
<path clip-path="url(#clipSE)" fill="none" d="M110 400L200 370 240 390 280 370M30 385L60 410 40 450 0 470M30 385H0M105 350L110 395M180 330L205 375"/><path fill="none" d="M370 260L382 300 425 295"/></g>
</g>
<g class="place faded"><text x="1283" y="534">A 114</text><text x="1014" y="741">A 111</text><text x="962" y="919">A 100</text><text x="827" y="1164">A 115</text><text x="1335" y="1132">A 113</text><text x="1080" y="1147">A 103</text><text x="1222" y="964" style="font-size:40px">Berlin</text><text x="824" y="1110" class="it">Grunewald</text></g>
</svg>
      <div class="zoomctl"><span>+</span><span>−</span></div>
      <div class="legend"><div class="ticks"><span>1</span><span>96</span></div><div class="ramp"></div></div>
      <div class="attribution"><svg width="10" height="6" viewBox="0 0 10 6"><path fill="#4C7BE1" d="M0 0h10v3H0z"/><path fill="#FFD500" d="M0 3h10v3H0z"/></svg> <a>Leaflet</a> | © <a>OpenStreetMap</a> contributors</div>
    </div>
  </main>
</div>
</body>
</html>
```
FILE: styles.css
```css
* { box-sizing: border-box; }
body { margin: 0; height: 1080px; overflow: hidden; background: #0e1117; font-family: "Noto Sans", sans-serif; display: flex; flex-direction: column; }
svg { flex: none; display: block; }

.taskbar { height: 44px; flex: none; display: flex; justify-content: space-between; background: linear-gradient(90deg, #292c38 0, #2a2d37 480px, #34353f 800px, #3b353c 1200px, #3c353b 1700px, #292c36 1840px, #282c36); position: relative; box-shadow: 0 1px 6px rgba(0,0,0,.4); }
.launchers { display: flex; }
.launch { width: 50px; display: flex; align-items: center; justify-content: center; margin-right: 2px; }
.launch.kubuntu { width: 43px; }
.launch.active { background: #36617f; border-bottom: 3px solid #3daee9; padding-top: 2px; }
.launch.open { background: #484a55; border-bottom: 3px solid #6d6e78; padding-top: 3px; }
.tray { display: flex; align-items: center; color: #fff; padding-right: 17px; }
.lang { font-size: 16px; font-weight: 600; margin: 0 12px 0 13px; line-height: 20px; }
.tray svg:nth-of-type(3) { margin: 0 10px 0 10px; }
.tray svg:nth-of-type(4) { margin-right: 12px; }
.clock { display: flex; flex-direction: column; align-items: center; width: 52px; margin-right: 22px; padding-top: 1px; }
.time { font-size: 16px; line-height: 14px; height: 14px; }
.date { font-size: 12.8px; line-height: 14px; height: 14px; }

.tabbar { height: 44px; flex: none; background: linear-gradient(#c4c5c6, #e6e7e9 4px, #eeeff1 8px); display: flex; align-items: center; }
.firefox-view { width: 43px; height: 44px; border-right: 1px solid #b4b5b7; padding: 13px 0 0 12px; }
.tabs { display: flex; gap: 4px; padding: 0 16px 0 4px; }
.tab { width: 221px; height: 36px; border-radius: 4px; display: flex; align-items: center; padding: 0 13px 0 10px; font-size: 13.3px; color: #2a2c30; white-space: nowrap; }
.tab .label { flex: 1; min-width: 0; overflow: hidden; margin-right: 1px; padding-top: 2px; -webkit-mask-image: linear-gradient(90deg, #000 88%, transparent); }
.tab .label.plain { padding-left: 1px; }
.tab.current { background: #fff; box-shadow: 0 0 4px rgba(0,0,0,.4); }
.fav { width: 16px; height: 16px; margin: 0 5px 0 1px; }
.bht { width: 16px; height: 16px; margin: 0 5px 0 1px; background: #fff; color: #666; font-size: 7px; font-weight: 700; line-height: 15px; text-align: center; }
.x { width: 8px; height: 8px; fill: none; stroke: #333; stroke-width: 1; }
.winctl { margin-left: auto; display: flex; align-items: center; gap: 17px; padding-right: 9px; fill: none; stroke: #333; stroke-width: 1.3; }
.winctl .min { margin-left: 45px; }

.toolbar { height: 41px; flex: none; background: #fff; border-bottom: 1px solid #b9bcc6; display: flex; align-items: center; fill: none; stroke: #303236; stroke-width: 1.4; }
.nav { width: 231px; display: flex; gap: 22px; padding-left: 17px; }
.dim { stroke: #a9a9ab; }
.urlbar { width: 1422px; height: 32px; background: #f1f1f1; border-radius: 4px; display: flex; align-items: center; padding: 0 8px; }
.urlbar svg:nth-child(2) { margin: 0 12px 0 14px; }
.url { flex: 1; font-size: 14px; line-height: 20px; padding-bottom: 2px; color: #2d3034; }
.url i { font-style: normal; color: #929497; }
.actions { display: flex; align-items: center; padding-left: 128px; gap: 22px; }
.decoration { height: 2px; flex: none; background: linear-gradient(90deg, #ff4b4b, #fffd80); }

.app { flex: 1; color: #fafafa; font-family: "Noto Sans CJK JP", "Noto Sans", sans-serif; }
header { height: 66px; display: flex; align-items: center; justify-content: flex-end; gap: 26px; padding-right: 36px; font-size: 12.5px; }
main { width: 800px; margin: 48px auto 0 608px; }
h1 { margin: 0; font-size: 39.4px; line-height: 52.8px; font-weight: 700; white-space: nowrap; }
.radio-title { font-size: 12.5px; line-height: 20px; margin: 18px 0 6px; }
.radio { height: 26px; display: flex; align-items: center; font-size: 14.3px; line-height: 24px; gap: 8px; }
.dot { width: 16px; height: 16px; border-radius: 50%; border: 1px solid #55585f; background: #11151d; }
.dot.on { border: 5px solid #ff4b4b; background: #fff; }

.map { position: relative; width: 800px; height: 610px; margin-top: 15px; overflow: hidden; font-family: "Noto Sans", sans-serif; }
.place { font-size: 29px; text-anchor: middle; fill: #333; stroke: #fff; stroke-opacity: .7; stroke-width: 5px; paint-order: stroke; }
.place .city { font-size: 38px; }
.it { font-style: italic; }
.faded { fill: #a07c20; opacity: .5; stroke: none; }
.shield rect { fill: #edcbd3; stroke: #d897a8; stroke-width: 3px; }
.zoomctl { position: absolute; left: 10px; top: 10px; width: 34px; border: 2px solid rgba(0,0,0,.25); border-radius: 4px; background-clip: padding-box; }
.zoomctl span { display: block; height: 30px; background: #fff; color: #000; font: bold 22px/33px "Liberation Mono", monospace; text-align: center; border-radius: 0 0 2px 2px; }
.zoomctl span:first-child { border-bottom: 1px solid #ccc; border-radius: 2px 2px 0 0; }
.legend { position: absolute; left: 365px; top: 12px; width: 400px; color: #111; }
.ticks { display: flex; justify-content: space-between; font-size: 10px; line-height: 13px; height: 13px; margin: 0 -6px 0 -3px; }
.ramp { height: 11px; border-top: 1px solid #000; background: linear-gradient(90deg, #fff726, #f4bd28 34%, #f89a27 50%, #fd6c2a 75%, #ff2b31); }
.attribution { position: absolute; right: 0; bottom: 0; width: 197px; height: 14px; background: rgba(255,255,255,.85); color: #333; font: 10px/14px "Liberation Sans", sans-serif; padding: 0 5px; white-space: nowrap; display: flex; align-items: center; justify-content: space-between; }
.attribution a { color: #0078a8; }
```
